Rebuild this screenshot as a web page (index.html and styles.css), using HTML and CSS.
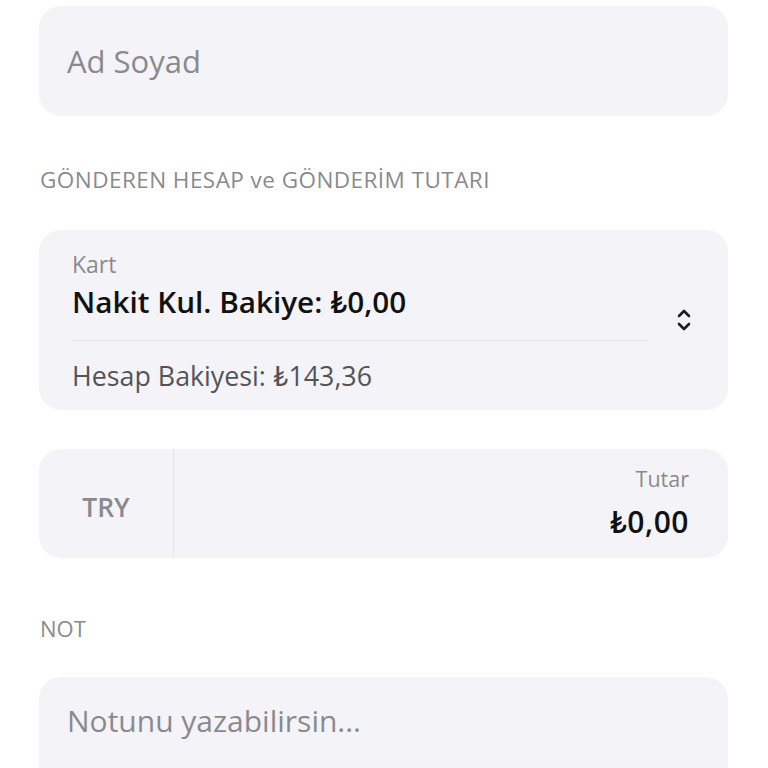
FILE: index.html
```html
<!DOCTYPE html>
<html lang="tr">
<head>
    <meta charset="UTF-8">
    <meta name="viewport" content="width=device-width, initial-scale=1.0">
    <title>Para Gönder</title>
    <link rel="stylesheet" href="styles.css">
</head>
<body>
    <div class="form">
        <div class="field name-field">
            <span class="placeholder name-placeholder">Ad Soyad</span>
        </div>

        <div class="section-title">GÖNDEREN HESAP ve GÖNDERİM TUTARI</div>

        <div class="field account-field">
            <div class="account-info">
                <div class="small-label">Kart</div>
                <div class="account-name">Nakit Kul. Bakiye: ₺0,00</div>
                <div class="divider"></div>
                <div class="balance">Hesap Bakiyesi: ₺143,36</div>
            </div>
            <svg class="chevrons" width="16" height="26" viewBox="0 0 16 26">
                <path d="M3 9 L8 4 L13 9" fill="none" stroke="#1c1c1e" stroke-width="2.6" stroke-linecap="round" stroke-linejoin="round"/>
                <path d="M3 17 L8 22 L13 17" fill="none" stroke="#1c1c1e" stroke-width="2.6" stroke-linecap="round" stroke-linejoin="round"/>
            </svg>
        </div>

        <div class="field amount-field">
            <div class="currency">TRY</div>
            <div class="amount">
                <div class="small-label amount-label">Tutar</div>
                <div class="amount-value">₺0,00</div>
            </div>
        </div>

        <div class="section-title note-title">NOT</div>

        <div class="field note-field">
            <span class="placeholder">Notunu yazabilirsin...</span>
        </div>
    </div>
</body>
</html>
```

FILE: styles.css
```css
/* CSS Style */
body {
    font-family: "Open Sans", Lato, sans-serif;
    background-color: #fff;
    margin: 0;
    padding: 0;
}
.form {
    padding: 6px 40px 0 39px;
    height: 762px;
    overflow: hidden;
}
.field {
    background-color: #f4f4f8;
    border-radius: 22px;
}
.placeholder {
    color: #8a8a8e;
    font-size: 30px;
    line-height: 40px;
}
.name-placeholder {
    font-size: 31px;
}
.name-field {
    height: 110px;
    display: flex;
    align-items: center;
    padding-left: 28px;
}
.section-title {
    color: #8a8a8e;
    font-size: 22.5px;
    letter-spacing: 0.45px;
    line-height: 30px;
    margin: 49px 0 0 1px;
    height: 65px;
}
.account-field {
    height: 180px;
    box-sizing: border-box;
    display: flex;
    align-items: center;
    padding: 0 36px 0 33px;
}
.account-info {
    flex: 1;
    align-self: flex-start;
    padding: 20px 28px 0 0;
}
.small-label {
    color: #8a8a8e;
    font-size: 23px;
    line-height: 28px;
}
.account-name {
    color: #111;
    font-size: 29.7px;
    line-height: 36px;
    font-weight: 600;
    margin-top: 6px;
}
.divider {
    height: 1px;
    background-color: #e6e6eb;
    margin: 20px 0 18px;
}
.balance {
    color: #545458;
    font-size: 26.8px;
    line-height: 34px;
}
.chevrons {
    display: block;
}
.amount-field {
    height: 109px;
    margin-top: 39px;
    display: flex;
}
.currency {
    width: 134px;
    border-right: 1px solid #e3e3e8;
    display: flex;
    align-items: center;
    justify-content: center;
    padding-top: 6px;
    color: #8a8a8e;
    font-size: 26.5px;
    font-weight: 600;
}
.amount {
    flex: 1;
    text-align: right;
    padding: 16px 39px 0 0;
}
.amount-label {
    font-size: 21.5px;
}
.amount-value {
    color: #111;
    font-size: 30px;
    letter-spacing: 0.5px;
    line-height: 36px;
    font-weight: 600;
    margin-top: 11px;
}
.note-title {
    margin-top: 55px;
    font-size: 22px;
    letter-spacing: 0;
    height: 64px;
}
.note-field {
    height: 120px;
    padding: 24px 28px 0;
}
```
